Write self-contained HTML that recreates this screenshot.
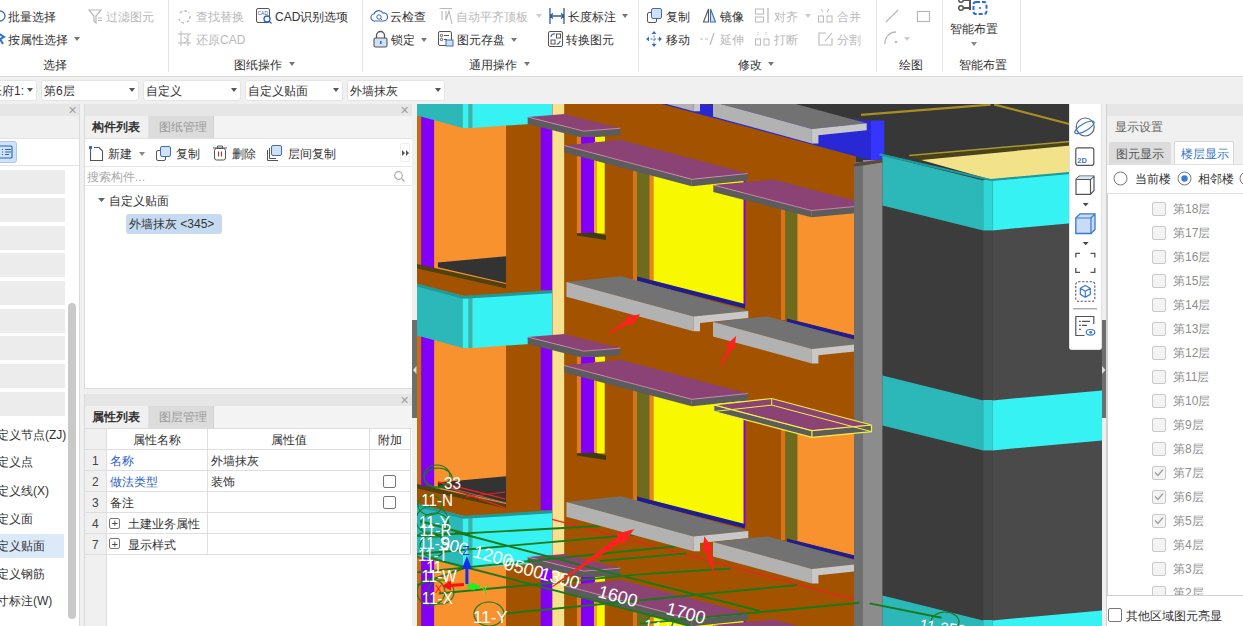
<!DOCTYPE html>
<html><head><meta charset="utf-8">
<style>
*{margin:0;padding:0;box-sizing:border-box}
html,body{width:1243px;height:626px;overflow:hidden;background:#f0f0f0;font-family:"Liberation Sans",sans-serif;font-size:12px;color:#333}
.a{position:absolute;white-space:nowrap;line-height:14px}
.arr{position:absolute;width:0;height:0;border-left:3px solid transparent;border-right:3px solid transparent;border-top:4px solid #777}
svg{position:absolute;overflow:visible}
</style></head><body>
<div style="position:absolute;left:0px;top:0px;width:1243px;height:77px;background:#fff;"></div><div style="position:absolute;left:0px;top:76px;width:1243px;height:1px;background:#d9d9d9;"></div><div style="position:absolute;left:168px;top:0px;width:1px;height:72px;background:#e3e3e3;"></div><div style="position:absolute;left:362px;top:0px;width:1px;height:72px;background:#e3e3e3;"></div><div style="position:absolute;left:638px;top:0px;width:1px;height:72px;background:#e3e3e3;"></div><div style="position:absolute;left:876px;top:0px;width:1px;height:72px;background:#e3e3e3;"></div><div style="position:absolute;left:942px;top:0px;width:1px;height:72px;background:#e3e3e3;"></div><div style="position:absolute;left:1020px;top:0px;width:1px;height:72px;background:#e3e3e3;"></div><svg style="left:0px;top:9px;" width="6" height="14" viewBox="0 0 6 14"><circle cx="0" cy="7" r="5" fill="none" stroke="#3d6fb8" stroke-width="1.3"/></svg><div class="a" style="left:8px;top:9.5px;">批量选择</div><svg style="left:0px;top:31px;" width="6" height="16" viewBox="0 0 6 16"><path d="M-2 2 L4 6 L0 8 L3 13" fill="none" stroke="#2f6fd0" stroke-width="2"/></svg><div class="a" style="left:8px;top:32.5px;">按属性选择</div><div class="arr" style="left:74px;top:37px;border-top-color:#777"></div><svg style="left:88px;top:9px;" width="14" height="15" viewBox="0 0 14 15"><path d="M1 1 H13 L8 7 V14 L6 12 V7 Z" fill="none" stroke="#b9b9b9" stroke-width="1.2"/><path d="M10 9h4M10 11.5h4" stroke="#b9b9b9"/></svg><div class="a" style="left:106px;top:10px;color:#b9b9b9;">过滤图元</div><div class="a" style="left:43px;top:58px;">选择</div><svg style="left:177px;top:9px;" width="15" height="16" viewBox="0 0 15 16"><path d="M3 4 A6 6 0 0 1 12 4 M13 7 A6 6 0 0 1 10 13 M7 14 A6 6 0 0 1 2 10" fill="none" stroke="#b9b9b9" stroke-width="1.3" stroke-dasharray="3 1.5"/></svg><div class="a" style="left:196px;top:10px;color:#b9b9b9;">查找替换</div><svg style="left:177px;top:31px;" width="15" height="16" viewBox="0 0 15 16"><path d="M1 3H14M4 0V15M1 12H14M11 3V15" fill="none" stroke="#b9b9b9" stroke-width="1"/><path d="M7 6l4 3-4 3" fill="none" stroke="#b9b9b9"/></svg><div class="a" style="left:196px;top:32.5px;color:#b9b9b9;">还原CAD</div><svg style="left:256px;top:8px;" width="16" height="17" viewBox="0 0 16 17"><rect x="0.5" y="0.5" width="13" height="14" rx="1.5" fill="none" stroke="#555"/><text x="1.5" y="7" font-size="5" fill="#2d62c0" font-family="Liberation Sans">CAD</text><circle cx="11" cy="11" r="3" fill="#fff" stroke="#2d62c0" stroke-width="1.3"/><path d="M13 13l2.5 2.5" stroke="#2d62c0" stroke-width="1.3"/></svg><div class="a" style="left:275px;top:10px;">CAD识别选项</div><div class="a" style="left:234px;top:57.5px;">图纸操作</div><div class="arr" style="left:289px;top:62px;border-top-color:#777"></div><svg style="left:371px;top:8px;" width="16" height="16" viewBox="0 0 16 16"><path d="M4 13 A3.5 3.5 0 0 1 3 6 A5 5 0 0 1 12 5 A4 4 0 0 1 13 13 Z" fill="none" stroke="#3d6fb8" stroke-width="1.2"/><circle cx="8" cy="9" r="2.2" fill="none" stroke="#3d6fb8"/><path d="M9.5 10.5l1.5 1.5" stroke="#3d6fb8"/></svg><div class="a" style="left:390px;top:9.5px;">云检查</div><svg style="left:439px;top:8px;" width="14" height="17" viewBox="0 0 14 17"><path d="M0.5 0.5H13M3 3V12M7 3V12M7 12 L10 3 L13 16" fill="none" stroke="#b9b9b9" stroke-width="1.1"/></svg><div class="a" style="left:456px;top:9.5px;color:#b9b9b9;">自动平齐顶板</div><div class="arr" style="left:536px;top:14px;border-top-color:#ccc"></div><svg style="left:549px;top:8px;" width="16" height="16" viewBox="0 0 16 16"><path d="M1 0V16M15 0V16M1 8H15M1 8l3-2.5M1 8l3 2.5M15 8l-3-2.5M15 8l-3 2.5" fill="none" stroke="#2d5aa0" stroke-width="1.3"/></svg><div class="a" style="left:568px;top:9.5px;">长度标注</div><div class="arr" style="left:622px;top:14px;border-top-color:#777"></div><svg style="left:373px;top:31px;" width="15" height="17" viewBox="0 0 15 17"><path d="M3.5 7V4.5A4 4 0 0 1 11.5 4.5V7" fill="none" stroke="#555" stroke-width="1.3"/><rect x="1" y="7" width="13" height="9" rx="1.5" fill="#cfe0f7" stroke="#555" stroke-width="1.1"/><rect x="7" y="10" width="1.5" height="3" fill="#2d62c0"/></svg><div class="a" style="left:391px;top:32.5px;">锁定</div><div class="arr" style="left:421px;top:37.5px;border-top-color:#777"></div><svg style="left:438px;top:31px;" width="16" height="16" viewBox="0 0 16 16"><rect x="0.5" y="0.5" width="13" height="14" rx="1.5" fill="none" stroke="#555"/><circle cx="3.5" cy="4.5" r="1.2" fill="none" stroke="#555"/><path d="M6 4.5H11M6 8.5H9" stroke="#555"/><circle cx="3.5" cy="8.5" r="1.2" fill="none" stroke="#555"/><rect x="8" y="9" width="7" height="6" fill="#cfe0f7" stroke="#3d6fb8"/></svg><div class="a" style="left:457px;top:32.5px;">图元存盘</div><div class="arr" style="left:511px;top:37.5px;border-top-color:#777"></div><svg style="left:548px;top:31px;" width="15" height="16" viewBox="0 0 15 16"><rect x="0.5" y="0.5" width="14" height="15" rx="1.5" fill="none" stroke="#555"/><rect x="3" y="9" width="4" height="4" fill="none" stroke="#555"/><rect x="8.5" y="3" width="4" height="4" fill="none" stroke="#555"/><path d="M3 6A3 3 0 0 1 7 3M12 10A3 3 0 0 1 8.5 13" fill="none" stroke="#3d6fb8" stroke-width="1.2"/></svg><div class="a" style="left:566px;top:32.5px;">转换图元</div><div class="a" style="left:469px;top:57.5px;">通用操作</div><div class="arr" style="left:524px;top:62px;border-top-color:#777"></div><svg style="left:647px;top:8px;" width="15" height="15" viewBox="0 0 15 15"><rect x="0.5" y="4.5" width="9" height="10" rx="1.5" fill="#fff" stroke="#555"/><rect x="4.5" y="0.5" width="10" height="10" rx="1.5" fill="#cfe0f7" stroke="#3d6fb8"/></svg><div class="a" style="left:666px;top:9.5px;">复制</div><svg style="left:646px;top:31px;" width="16" height="16" viewBox="0 0 16 16"><path d="M8 1V15M1 8H15" stroke="#3d6fb8" stroke-width="1" stroke-dasharray="2 1.5"/><path d="M8 0l-2.5 3h5zM8 16l-2.5-3h5zM0 8l3-2.5v5zM16 8l-3-2.5v5z" fill="#3d6fb8"/></svg><div class="a" style="left:666px;top:32.5px;">移动</div><svg style="left:703px;top:8px;" width="13" height="15" viewBox="0 0 13 15"><path d="M5.5 1 L0.5 14 H5.5Z" fill="none" stroke="#555" stroke-width="1.1"/><path d="M7.5 1 L12.5 14 H7.5Z" fill="#cfe0f7" stroke="#3d6fb8" stroke-width="1.1"/></svg><div class="a" style="left:720px;top:9.5px;">镜像</div><svg style="left:700px;top:32px;" width="15" height="14" viewBox="0 0 15 14"><path d="M0 7H3M5 7H8M10 13 L14 1" stroke="#b9b9b9" stroke-width="1.2"/></svg><div class="a" style="left:720px;top:32.5px;color:#b9b9b9;">延伸</div><svg style="left:755px;top:8px;" width="15" height="15" viewBox="0 0 15 15"><rect x="0.5" y="1" width="8" height="5" fill="none" stroke="#b9b9b9"/><rect x="0.5" y="9" width="8" height="5" fill="none" stroke="#b9b9b9"/><path d="M13 0V15" stroke="#b9b9b9" stroke-width="1.3"/></svg><div class="a" style="left:774px;top:9.5px;color:#b9b9b9;">对齐</div><div class="arr" style="left:805px;top:14px;border-top-color:#ccc"></div><svg style="left:755px;top:31px;" width="15" height="15" viewBox="0 0 15 15"><rect x="0.5" y="8" width="5" height="6" fill="none" stroke="#b9b9b9"/><rect x="9" y="8" width="5" height="6" fill="none" stroke="#b9b9b9"/><path d="M3 1v4M11 1v4" stroke="#b9b9b9" stroke-dasharray="1 1"/></svg><div class="a" style="left:774px;top:32.5px;color:#b9b9b9;">打断</div><svg style="left:818px;top:8px;" width="15" height="15" viewBox="0 0 15 15"><rect x="0.5" y="8" width="5" height="6" fill="none" stroke="#b9b9b9"/><rect x="9" y="8" width="5" height="6" fill="none" stroke="#b9b9b9"/><path d="M3 1l2 3M11 1l-2 3" stroke="#b9b9b9"/></svg><div class="a" style="left:837px;top:9.5px;color:#b9b9b9;">合并</div><svg style="left:818px;top:32px;" width="15" height="14" viewBox="0 0 15 14"><path d="M8 1H1V13H14V6" fill="none" stroke="#b9b9b9" stroke-width="1.1"/><path d="M7 9 L14 1" stroke="#b9b9b9" stroke-width="1.1"/></svg><div class="a" style="left:837px;top:32.5px;color:#b9b9b9;">分割</div><div class="a" style="left:738px;top:57.5px;">修改</div><div class="arr" style="left:768px;top:62px;border-top-color:#777"></div><svg style="left:885px;top:9px;" width="14" height="14" viewBox="0 0 14 14"><path d="M1 13 L13 1" stroke="#b9b9b9" stroke-width="1.3"/></svg><svg style="left:917px;top:11px;" width="13" height="11" viewBox="0 0 13 11"><rect x="0.5" y="0.5" width="12" height="10" fill="none" stroke="#b9b9b9" stroke-width="1.2"/></svg><svg style="left:884px;top:30px;" width="15" height="15" viewBox="0 0 15 15"><path d="M1 14 A11 11 0 0 1 12 2" fill="none" stroke="#b9b9b9" stroke-width="1.3"/><circle cx="12" cy="12" r="1.3" fill="#b9b9b9"/></svg><div class="arr" style="left:904px;top:36.5px;border-top-color:#ccc"></div><div class="a" style="left:899px;top:58px;">绘图</div><svg style="left:958px;top:-2px;" width="31" height="18" viewBox="0 0 31 18"><path d="M3 2H12M3 10H12M12 0V12" stroke="#555" stroke-width="2"/><circle cx="3" cy="2" r="2.3" fill="#fff" stroke="#555" stroke-width="1.5"/><circle cx="3" cy="10" r="2.3" fill="#fff" stroke="#555" stroke-width="1.5"/><rect x="15.5" y="4" width="13" height="12" rx="2.5" fill="none" stroke="#2d6ad8" stroke-width="2" stroke-dasharray="4 2"/><circle cx="22" cy="10" r="1" fill="#2d6ad8"/></svg><div class="a" style="left:950px;top:22px;">智能布置</div><div class="arr" style="left:971px;top:42px;border-top-color:#888"></div><div class="a" style="left:959px;top:58px;">智能布置</div><div style="position:absolute;left:-61px;top:80px;width:98px;height:21px;background:#fff;border:1px solid #e4e4e4;border-radius:3px"></div><div class="a" style="left:-34px;top:83.5px;color:#333;">首层帐府1:</div><div class="arr" style="left:27px;top:88px;border-top-color:#555"></div><div style="position:absolute;left:41px;top:80px;width:98px;height:21px;background:#fff;border:1px solid #e4e4e4;border-radius:3px"></div><div class="a" style="left:44px;top:83.5px;color:#333;">第6层</div><div class="arr" style="left:129px;top:88px;border-top-color:#555"></div><div style="position:absolute;left:143px;top:80px;width:98px;height:21px;background:#fff;border:1px solid #e4e4e4;border-radius:3px"></div><div class="a" style="left:146px;top:83.5px;color:#333;">自定义</div><div class="arr" style="left:231px;top:88px;border-top-color:#555"></div><div style="position:absolute;left:245px;top:80px;width:98px;height:21px;background:#fff;border:1px solid #e4e4e4;border-radius:3px"></div><div class="a" style="left:248px;top:83.5px;color:#333;">自定义贴面</div><div class="arr" style="left:333px;top:88px;border-top-color:#555"></div><div style="position:absolute;left:347px;top:80px;width:98px;height:21px;background:#fff;border:1px solid #e4e4e4;border-radius:3px"></div><div class="a" style="left:350px;top:83.5px;color:#333;">外墙抹灰</div><div class="arr" style="left:435px;top:88px;border-top-color:#555"></div><div style="position:absolute;left:0px;top:104px;width:80px;height:522px;background:#fff;"></div><div style="position:absolute;left:0px;top:104px;width:80px;height:12px;background:#e6e6e6;"></div><div class="a" style="left:68px;top:103px;color:#a0a0a0;font-size:11px;">✕</div><div style="position:absolute;left:0px;top:116px;width:80px;height:22px;background:#f0f0f0;"></div><div style="position:absolute;left:0px;top:138px;width:80px;height:1px;background:#e3e3e3;"></div><div style="position:absolute;left:0px;top:165px;width:80px;height:1px;background:#e3e3e3;"></div><div style="position:absolute;left:-4px;top:141px;width:21px;height:22px;background:#cfe2f8;border:1px solid #a9c8ee;border-radius:3px"></div><svg style="left:0px;top:145px;" width="14" height="14" viewBox="0 0 14 14"><rect x="-3" y="1" width="15" height="12" rx="1" fill="none" stroke="#2d62c0" stroke-width="1.1"/><path d="M2 4.5h1M5 4.5h6M2 7h1M5 7h6M2 9.5h1M5 9.5h4" stroke="#2d62c0"/></svg><div style="position:absolute;left:0px;top:170px;width:65px;height:24px;background:#ececec;"></div><div style="position:absolute;left:0px;top:198px;width:65px;height:24px;background:#ececec;"></div><div style="position:absolute;left:0px;top:226px;width:65px;height:24px;background:#ececec;"></div><div style="position:absolute;left:0px;top:253px;width:65px;height:24px;background:#ececec;"></div><div style="position:absolute;left:0px;top:281px;width:65px;height:24px;background:#ececec;"></div><div style="position:absolute;left:0px;top:309px;width:65px;height:24px;background:#ececec;"></div><div style="position:absolute;left:0px;top:336px;width:65px;height:24px;background:#ececec;"></div><div style="position:absolute;left:0px;top:364px;width:65px;height:24px;background:#ececec;"></div><div style="position:absolute;left:0px;top:392px;width:65px;height:24px;background:#ececec;"></div><div style="position:absolute;left:0px;top:534px;width:64px;height:24px;background:#dce9f9;"></div><div class="a" style="left:-3px;top:427.8px;color:#333;">定义节点(ZJ)</div><div class="a" style="left:-3px;top:454.7px;color:#333;">定义点</div><div class="a" style="left:-3px;top:484px;color:#333;">定义线(X)</div><div class="a" style="left:-3px;top:511.6px;color:#333;">定义面</div><div class="a" style="left:-3px;top:539px;color:#333;">定义贴面</div><div class="a" style="left:-3px;top:566.8px;color:#333;">定义钢筋</div><div class="a" style="left:-3px;top:594px;color:#333;">寸标注(W)</div><div style="position:absolute;left:68px;top:303px;width:8px;height:316px;background:#c9c9c9;border-radius:4px"></div><div style="position:absolute;left:79px;top:104px;width:1px;height:522px;background:#dadada;"></div><div style="position:absolute;left:84px;top:104px;width:329px;height:285px;background:#fff;"></div><div style="position:absolute;left:84px;top:104px;width:329px;height:12px;background:#e6e6e6;"></div><div class="a" style="left:400px;top:103px;color:#a0a0a0;font-size:11px;">✕</div><div style="position:absolute;left:84px;top:116px;width:329px;height:22px;background:#f3f3f3;"></div><div style="position:absolute;left:84px;top:116px;width:65px;height:23px;background:#f0f0f0;border-right:1px solid #e0e0e0"></div><div style="position:absolute;left:149px;top:116px;width:65px;height:22px;background:#dcdcdc;border-right:1px solid #d0d0d0"></div><div class="a" style="left:92px;top:120px;color:#333;font-weight:bold;">构件列表</div><div class="a" style="left:159px;top:120px;color:#999;">图纸管理</div><div style="position:absolute;left:84px;top:138px;width:329px;height:1px;background:#e2e2e2;"></div><svg style="left:89px;top:146px;" width="15" height="16" viewBox="0 0 15 16"><path d="M1.5 2.5V14.5H13.5V5L10 1.5H5" fill="none" stroke="#555" stroke-width="1.1"/><path d="M0 0l3 3M3 0L0 3M1.5 0v3M0 1.5h3" stroke="#2d62c0" stroke-width="0.9"/></svg><div class="a" style="left:108px;top:146.5px;">新建</div><div class="arr" style="left:139px;top:151.5px;border-top-color:#888"></div><svg style="left:156px;top:146px;" width="15" height="15" viewBox="0 0 15 15"><rect x="0.5" y="4.5" width="9" height="10" rx="1.5" fill="#fff" stroke="#555"/><rect x="4.5" y="0.5" width="10" height="10" rx="1.5" fill="#cfe0f7" stroke="#3d6fb8"/></svg><div class="a" style="left:176px;top:146.5px;">复制</div><svg style="left:213px;top:145px;" width="14" height="16" viewBox="0 0 14 16"><path d="M0 3H14M4.5 3V1H9.5V3" fill="none" stroke="#555"/><rect x="1.5" y="3.5" width="11" height="11.5" rx="2" fill="none" stroke="#555"/><path d="M5.5 6.5V11.5M8.5 6.5V11.5" stroke="#c03030" stroke-width="1.1"/></svg><div class="a" style="left:232px;top:146.5px;">删除</div><svg style="left:267px;top:145px;" width="16" height="16" viewBox="0 0 16 16"><path d="M0.5 5V15.5H11" fill="none" stroke="#555"/><path d="M2.5 3V13.5H9" fill="none" stroke="#555"/><rect x="4.5" y="0.5" width="10" height="10" rx="1.5" fill="#cfe0f7" stroke="#3d6fb8"/></svg><div class="a" style="left:288px;top:146.5px;">层间复制</div><div style="position:absolute;left:400px;top:143px;width:10px;height:19px;background:#fff;border:1px solid #eee;border-radius:2px"></div><svg style="left:402px;top:150px;" width="8" height="6" viewBox="0 0 8 6"><path d="M0 0l3 3-3 3zM4 0l3 3-3 3z" fill="#555"/></svg><div style="position:absolute;left:84px;top:166px;width:329px;height:1px;background:#e8e8e8;"></div><div class="a" style="left:87px;top:169.5px;color:#aaa;">搜索构件...</div><svg style="left:394px;top:171px;" width="11" height="11" viewBox="0 0 11 11"><circle cx="4.5" cy="4.5" r="3.8" fill="none" stroke="#aaa" stroke-width="1.2"/><path d="M7.5 7.5l3 3" stroke="#aaa" stroke-width="1.3"/></svg><div style="position:absolute;left:84px;top:185px;width:329px;height:1px;background:#e8e8e8;"></div><svg style="left:98px;top:198px;" width="7" height="5" viewBox="0 0 7 5"><path d="M0 0h7l-3.5 4z" fill="#666"/></svg><div class="a" style="left:109px;top:193.5px;">自定义贴面</div><div style="position:absolute;left:126px;top:214px;width:96px;height:20px;background:#c6dbf1;border-radius:3px"></div><div class="a" style="left:129px;top:217px;">外墙抹灰 &lt;345&gt;</div><div style="position:absolute;left:84px;top:388px;width:329px;height:1px;background:#dcdcdc;"></div><div style="position:absolute;left:84px;top:104px;width:1px;height:285px;background:#dadada;"></div><div style="position:absolute;left:412px;top:104px;width:1px;height:285px;background:#dadada;"></div><div style="position:absolute;left:84px;top:394px;width:329px;height:232px;background:#fff;"></div><div style="position:absolute;left:84px;top:394px;width:329px;height:12px;background:#e6e6e6;"></div><div class="a" style="left:400px;top:393px;color:#a0a0a0;font-size:11px;">✕</div><div style="position:absolute;left:84px;top:406px;width:329px;height:22px;background:#f3f3f3;"></div><div style="position:absolute;left:84px;top:406px;width:65px;height:23px;background:#f0f0f0;border-right:1px solid #e0e0e0"></div><div style="position:absolute;left:149px;top:406px;width:65px;height:22px;background:#dcdcdc;border-right:1px solid #d0d0d0"></div><div class="a" style="left:92px;top:410px;color:#333;font-weight:bold;">属性列表</div><div class="a" style="left:159px;top:410px;color:#999;">图层管理</div><div style="position:absolute;left:84px;top:428px;width:329px;height:1px;background:#dcdcdc;"></div><div style="position:absolute;left:85px;top:429px;width:22px;height:197px;background:#f0f0f0;"></div><div style="position:absolute;left:85px;top:449px;width:325px;height:1px;background:#dedede;"></div><div style="position:absolute;left:85px;top:470px;width:325px;height:1px;background:#dedede;"></div><div style="position:absolute;left:85px;top:491px;width:325px;height:1px;background:#dedede;"></div><div style="position:absolute;left:85px;top:512px;width:325px;height:1px;background:#dedede;"></div><div style="position:absolute;left:85px;top:533px;width:325px;height:1px;background:#dedede;"></div><div style="position:absolute;left:85px;top:554px;width:325px;height:1px;background:#dedede;"></div><div style="position:absolute;left:106px;top:429px;width:1px;height:125px;background:#dedede;"></div><div style="position:absolute;left:207px;top:429px;width:1px;height:125px;background:#dedede;"></div><div style="position:absolute;left:369px;top:429px;width:1px;height:125px;background:#dedede;"></div><div style="position:absolute;left:410px;top:429px;width:1px;height:125px;background:#dedede;"></div><div style="position:absolute;left:106px;top:554px;width:1px;height:72px;background:#dedede;"></div><div class="a" style="left:133px;top:432.5px;">属性名称</div><div class="a" style="left:271px;top:432.5px;">属性值</div><div class="a" style="left:378px;top:432.5px;">附加</div><div class="a" style="left:92px;top:453.5px;color:#444;">1</div><div class="a" style="left:110px;top:453.5px;color:#2d5cc8;">名称</div><div class="a" style="left:211px;top:453.5px;">外墙抹灰</div><div class="a" style="left:92px;top:474.5px;color:#444;">2</div><div class="a" style="left:110px;top:474.5px;color:#2d5cc8;">做法类型</div><div class="a" style="left:211px;top:474.5px;">装饰</div><div style="position:absolute;left:383px;top:475px;width:13px;height:13px;background:#fff;border:1px solid #777;border-radius:2px"></div><div class="a" style="left:92px;top:495.5px;color:#444;">3</div><div class="a" style="left:110px;top:495.5px;color:#333;">备注</div><div style="position:absolute;left:383px;top:496px;width:13px;height:13px;background:#fff;border:1px solid #777;border-radius:2px"></div><div class="a" style="left:92px;top:516.5px;color:#444;">4</div><div style="position:absolute;left:109px;top:518px;width:11px;height:11px;background:#fff;border:1px solid #777;border-radius:2px"></div><div class="a" style="left:111.5px;top:516.0px;color:#444;font-size:11px;">+</div><div class="a" style="left:128px;top:516.5px;">土建业务属性</div><div class="a" style="left:92px;top:537.5px;color:#444;">7</div><div style="position:absolute;left:109px;top:538px;width:11px;height:11px;background:#fff;border:1px solid #777;border-radius:2px"></div><div class="a" style="left:111.5px;top:537.0px;color:#444;font-size:11px;">+</div><div class="a" style="left:128px;top:537.5px;">显示样式</div><div style="position:absolute;left:84px;top:394px;width:1px;height:232px;background:#dadada;"></div><div style="position:absolute;left:412px;top:394px;width:1px;height:232px;background:#dadada;"></div><div style="position:absolute;left:412px;top:104px;width:5px;height:522px;background:#f0f0f0;"></div><div style="position:absolute;left:412px;top:320px;width:5px;height:98px;background:#6e6e6e;"></div><svg style="left:413px;top:366px;" width="4" height="8" viewBox="0 0 4 8"><path d="M3.5 0V8L0 4Z" fill="#ddd"/></svg><div style="position:absolute;left:1102px;top:104px;width:4px;height:522px;background:#f0f0f0;"></div><div style="position:absolute;left:1102px;top:320px;width:4px;height:98px;background:#6e6e6e;"></div><svg style="left:1102px;top:366px;" width="4" height="8" viewBox="0 0 4 8"><path d="M0 0V8L3.5 4Z" fill="#ddd"/></svg><div style="position:absolute;left:1106px;top:104px;width:137px;height:522px;background:#fff;"></div><div style="position:absolute;left:1106px;top:104px;width:137px;height:12px;background:#e6e6e6;"></div><div style="position:absolute;left:1106px;top:116px;width:137px;height:21px;background:#f0f0f0;"></div><div class="a" style="left:1115px;top:119.5px;color:#666;">显示设置</div><div style="position:absolute;left:1106px;top:137px;width:137px;height:27px;background:#f0f0f0;"></div><div style="position:absolute;left:1109px;top:142px;width:62px;height:22px;background:#dcdcdc;border-radius:2px 2px 0 0"></div><div class="a" style="left:1116px;top:146.5px;color:#555;">图元显示</div><div style="position:absolute;left:1174px;top:141px;width:60px;height:24px;background:#fff;border:1px solid #d6d6d6;border-bottom:none;border-radius:2px 2px 0 0"></div><div class="a" style="left:1181px;top:146.5px;color:#3a78c8;">楼层显示</div><div style="position:absolute;left:1106px;top:164px;width:137px;height:1px;background:#e0e0e0;"></div><svg style="left:1113px;top:171px;" width="16" height="16" viewBox="0 0 16 16"><circle cx="7.5" cy="7.5" r="6.5" fill="#fff" stroke="#777"/></svg><div class="a" style="left:1135px;top:172px;">当前楼</div><svg style="left:1177px;top:171px;" width="16" height="16" viewBox="0 0 16 16"><circle cx="7.5" cy="7.5" r="6.5" fill="#fff" stroke="#777"/><circle cx="7.5" cy="7.5" r="3.2" fill="#3a7ad8"/></svg><div class="a" style="left:1197.5px;top:172px;">相邻楼</div><svg style="left:1239px;top:171px;" width="16" height="16" viewBox="0 0 16 16"><circle cx="7.5" cy="7.5" r="6.5" fill="#fff" stroke="#777"/></svg><div style="position:absolute;left:1106px;top:193px;width:137px;height:1px;background:#e0e0e0;"></div><div style="position:absolute;left:1107px;top:194px;width:1px;height:402px;background:#cfcfcf;"></div><div style="position:absolute;left:1152px;top:202px;width:14px;height:14px;background:#f4f4f4;border:1px solid #c8c8c8;border-radius:2px"></div><div class="a" style="left:1173px;top:202px;color:#8e8e8e;">第18层</div><div style="position:absolute;left:1152px;top:226px;width:14px;height:14px;background:#f4f4f4;border:1px solid #c8c8c8;border-radius:2px"></div><div class="a" style="left:1173px;top:226px;color:#8e8e8e;">第17层</div><div style="position:absolute;left:1152px;top:250px;width:14px;height:14px;background:#f4f4f4;border:1px solid #c8c8c8;border-radius:2px"></div><div class="a" style="left:1173px;top:250px;color:#8e8e8e;">第16层</div><div style="position:absolute;left:1152px;top:274px;width:14px;height:14px;background:#f4f4f4;border:1px solid #c8c8c8;border-radius:2px"></div><div class="a" style="left:1173px;top:274px;color:#8e8e8e;">第15层</div><div style="position:absolute;left:1152px;top:298px;width:14px;height:14px;background:#f4f4f4;border:1px solid #c8c8c8;border-radius:2px"></div><div class="a" style="left:1173px;top:298px;color:#8e8e8e;">第14层</div><div style="position:absolute;left:1152px;top:322px;width:14px;height:14px;background:#f4f4f4;border:1px solid #c8c8c8;border-radius:2px"></div><div class="a" style="left:1173px;top:322px;color:#8e8e8e;">第13层</div><div style="position:absolute;left:1152px;top:346px;width:14px;height:14px;background:#f4f4f4;border:1px solid #c8c8c8;border-radius:2px"></div><div class="a" style="left:1173px;top:346px;color:#8e8e8e;">第12层</div><div style="position:absolute;left:1152px;top:370px;width:14px;height:14px;background:#f4f4f4;border:1px solid #c8c8c8;border-radius:2px"></div><div class="a" style="left:1173px;top:370px;color:#8e8e8e;">第11层</div><div style="position:absolute;left:1152px;top:394px;width:14px;height:14px;background:#f4f4f4;border:1px solid #c8c8c8;border-radius:2px"></div><div class="a" style="left:1173px;top:394px;color:#8e8e8e;">第10层</div><div style="position:absolute;left:1152px;top:418px;width:14px;height:14px;background:#f4f4f4;border:1px solid #c8c8c8;border-radius:2px"></div><div class="a" style="left:1173px;top:418px;color:#8e8e8e;">第9层</div><div style="position:absolute;left:1152px;top:442px;width:14px;height:14px;background:#f4f4f4;border:1px solid #c8c8c8;border-radius:2px"></div><div class="a" style="left:1173px;top:442px;color:#8e8e8e;">第8层</div><div style="position:absolute;left:1152px;top:466px;width:14px;height:14px;background:#f4f4f4;border:1px solid #c8c8c8;border-radius:2px"></div><svg style="left:1154px;top:468px;" width="10" height="9" viewBox="0 0 10 9"><path d="M1 4.5L4 7.5L9 1.5" fill="none" stroke="#a0a0a0" stroke-width="1.3"/></svg><div class="a" style="left:1173px;top:466px;color:#8e8e8e;">第7层</div><div style="position:absolute;left:1152px;top:490px;width:14px;height:14px;background:#f4f4f4;border:1px solid #c8c8c8;border-radius:2px"></div><svg style="left:1154px;top:492px;" width="10" height="9" viewBox="0 0 10 9"><path d="M1 4.5L4 7.5L9 1.5" fill="none" stroke="#a0a0a0" stroke-width="1.3"/></svg><div class="a" style="left:1173px;top:490px;color:#8e8e8e;">第6层</div><div style="position:absolute;left:1152px;top:514px;width:14px;height:14px;background:#f4f4f4;border:1px solid #c8c8c8;border-radius:2px"></div><svg style="left:1154px;top:516px;" width="10" height="9" viewBox="0 0 10 9"><path d="M1 4.5L4 7.5L9 1.5" fill="none" stroke="#a0a0a0" stroke-width="1.3"/></svg><div class="a" style="left:1173px;top:514px;color:#8e8e8e;">第5层</div><div style="position:absolute;left:1152px;top:538px;width:14px;height:14px;background:#f4f4f4;border:1px solid #c8c8c8;border-radius:2px"></div><div class="a" style="left:1173px;top:538px;color:#8e8e8e;">第4层</div><div style="position:absolute;left:1152px;top:562px;width:14px;height:14px;background:#f4f4f4;border:1px solid #c8c8c8;border-radius:2px"></div><div class="a" style="left:1173px;top:562px;color:#8e8e8e;">第3层</div><div style="position:absolute;left:1152px;top:586px;width:14px;height:14px;background:#f4f4f4;border:1px solid #c8c8c8;border-radius:2px"></div><div class="a" style="left:1173px;top:586px;color:#8e8e8e;">第2层</div><div style="position:absolute;left:1106px;top:596px;width:137px;height:30px;background:#fff;"></div><div style="position:absolute;left:1106px;top:595px;width:137px;height:1px;background:#cfcfcf;"></div><div style="position:absolute;left:1108px;top:608px;width:14px;height:14px;background:#fff;border:1px solid #777;border-radius:2px"></div><div class="a" style="left:1125.5px;top:608.5px;">其他区域图元亮显</div><div style="position:absolute;left:1106px;top:104px;width:1px;height:522px;background:#d0d0d0;"></div><svg style="left:417px;top:104px" width="685" height="522" viewBox="417 104 685 522"><defs><clipPath id="vc"><rect x="417" y="104" width="685" height="522"/></clipPath></defs><g clip-path="url(#vc)"><rect x="417.0" y="104.0" width="685.0" height="522.0" fill="#a35300"/><rect x="856.0" y="104.0" width="246.0" height="522.0" fill="#383838"/><rect x="417.0" y="104.0" width="4.2" height="522.0" fill="#c96b10"/><rect x="421.2" y="104.0" width="13.0" height="522.0" fill="#8200f6"/><rect x="434.2" y="104.0" width="71.8" height="522.0" fill="#f8922e"/><rect x="506.0" y="104.0" width="34.7" height="522.0" fill="#a35300"/><rect x="540.7" y="104.0" width="11.7" height="522.0" fill="#8200f6"/><rect x="552.4" y="104.0" width="12.0" height="522.0" fill="#f6e28e"/><rect x="564.4" y="104.0" width="291.6" height="522.0" fill="#a35300"/><polygon points="700.0,104.0 1102.0,104.0 1102.0,172.0 882.0,155.0 871.0,121.0" fill="#373737" /><polygon points="661.7,104.0 700.0,104.0 871.0,121.0 871.0,160.5" fill="#2828d4" /><polygon points="871.0,120.6 884.3,120.6 884.3,159.6 871.0,160.2" fill="#3535ff" /><g transform="translate(0,-440)"><polygon points="566.4,501.9 621.2,496.3 748.3,530.9 693.5,536.5" fill="#727272" /><polygon points="566.4,501.9 693.5,536.5 693.5,551.3 566.4,516.7" fill="#b2b2b2" /><polygon points="693.5,536.5 748.3,530.9 748.3,538.1 700.0,543.0 700.0,551.3 693.5,551.3" fill="#c8c8c8" /><polygon points="713.0,542.0 767.8,536.4 866.7,563.3 811.9,568.9" fill="#727272" /><polygon points="713.0,542.0 811.9,568.9 811.9,583.4 713.0,556.5" fill="#b2b2b2" /><polygon points="811.9,568.9 866.7,563.3 866.7,570.3 818.4,575.2 818.4,583.4 811.9,583.4" fill="#c8c8c8" /></g><g transform="translate(0,-220)"><polygon points="437.9,262.6 506.0,256.2 506.0,283.0 437.9,267.3" fill="#333333" /><polygon points="417.0,264.0 506.0,284.0 506.0,289.0 417.0,269.0" fill="#4f4210" /><polygon points="417.0,268.5 506.0,288.5 552.0,290.5 552.0,292.3 468.4,297.0 417.0,284.5" fill="#a35300" /><polygon points="417.0,285.4 462.9,297.9 462.9,348.0 417.0,335.4" fill="#2cb8b8" /><rect x="462.9" y="297.2" width="5.5" height="50.8" fill="#36f2f2"/><rect x="468.4" y="297.2" width="4.2" height="50.8" fill="#2cb8b8"/><polygon points="472.6,297.9 552.0,292.3 552.0,342.4 472.6,348.0" fill="#36f2f2" /><polyline points="417.0,285.0 462.9,297.3 552.0,291.8" fill="none" stroke="#1f9a9a" stroke-width="3" /><rect x="576.9" y="356.0" width="4.1" height="97.0" fill="#e07c1e"/><rect x="581.0" y="356.0" width="13.0" height="97.5" fill="#8200f6"/><rect x="594.0" y="356.0" width="3.0" height="97.5" fill="#f0a030"/><rect x="597.0" y="356.0" width="7.7" height="97.5" fill="#f8f800"/><polygon points="576.9,453.5 594.0,452.5 606.0,455.5 606.0,460.0 576.9,455.5" fill="#3e3a14" /><rect x="633.0" y="388.0" width="4.0" height="117.0" fill="#d87418"/><rect x="637.0" y="388.0" width="12.5" height="117.0" fill="#6e6a1e"/><rect x="649.5" y="388.0" width="4.0" height="117.0" fill="#e8841e"/><polygon points="653.5,392.0 743.7,397.0 743.7,525.0 653.5,501.0" fill="#f8f800" /><rect x="743.7" y="395.0" width="1.8" height="131.0" fill="#8200f6"/><polygon points="637.0,496.5 745.0,524.0 745.0,528.5 637.0,501.0" fill="#1e1e90" /><rect x="781.0" y="415.0" width="4.4" height="125.0" fill="#d87418"/><rect x="785.4" y="415.0" width="12.0" height="125.0" fill="#6e6a1e"/><polygon points="797.4,430.0 855.0,430.0 855.0,556.0 797.4,541.0" fill="#f8922e" /><polygon points="786.8,538.5 855.0,555.5 855.0,559.5 786.8,542.5" fill="#1e1e90" /><polygon points="527.7,337.0 564.4,334.1 620.4,348.2 583.7,351.1" fill="#8b4274" /><polygon points="527.7,337.0 583.7,351.1 583.7,358.1 527.7,344.0" fill="#5c5c5c" /><polygon points="583.7,351.1 620.4,348.2 620.4,355.2 583.7,358.1" fill="#5c5c5c" /><polyline points="527.7,337.0 583.7,351.1 620.4,348.2" fill="none" stroke="#d890c0" stroke-width="0.8" /><rect x="578.0" y="357.0" width="3.0" height="5.0" fill="#e07c1e"/><rect x="581.0" y="357.0" width="14.0" height="5.0" fill="#8200f6"/><rect x="595.0" y="357.0" width="10.0" height="4.5" fill="#f8f800"/><polygon points="564.4,365.5 620.4,359.7 747.8,393.5 691.8,399.3" fill="#8b4274" /><polygon points="564.4,365.5 691.8,399.3 691.8,406.3 564.4,372.5" fill="#5c5c5c" /><polygon points="691.8,399.3 747.8,393.5 747.8,400.5 691.8,406.3" fill="#5c5c5c" /><polyline points="564.4,365.5 691.8,399.3 747.8,393.5" fill="none" stroke="#d890c0" stroke-width="0.8" /><polygon points="713.3,405.1 773.3,399.6 871.5,425.0 811.5,430.5" fill="#8b4274" /><polygon points="713.3,405.1 811.5,430.5 811.5,437.3 713.3,411.9" fill="#5c5c5c" /><polygon points="811.5,430.5 871.5,425.0 871.5,431.8 811.5,437.3" fill="#5c5c5c" /><polyline points="713.3,405.1 811.5,430.5 871.5,425.0" fill="none" stroke="#d890c0" stroke-width="0.8" /><polygon points="566.4,501.9 621.2,496.3 748.3,530.9 693.5,536.5" fill="#727272" /><polygon points="566.4,501.9 693.5,536.5 693.5,551.3 566.4,516.7" fill="#b2b2b2" /><polygon points="693.5,536.5 748.3,530.9 748.3,538.1 700.0,543.0 700.0,551.3 693.5,551.3" fill="#c8c8c8" /><polygon points="713.0,542.0 767.8,536.4 866.7,563.3 811.9,568.9" fill="#727272" /><polygon points="713.0,542.0 811.9,568.9 811.9,583.4 713.0,556.5" fill="#b2b2b2" /><polygon points="811.9,568.9 866.7,563.3 866.7,570.3 818.4,575.2 818.4,583.4 811.9,583.4" fill="#c8c8c8" /></g><g transform="translate(0,0)"><polygon points="437.9,262.6 506.0,256.2 506.0,283.0 437.9,267.3" fill="#333333" /><polygon points="417.0,264.0 506.0,284.0 506.0,289.0 417.0,269.0" fill="#4f4210" /><polygon points="417.0,268.5 506.0,288.5 552.0,290.5 552.0,292.3 468.4,297.0 417.0,284.5" fill="#a35300" /><polygon points="417.0,285.4 462.9,297.9 462.9,348.0 417.0,335.4" fill="#2cb8b8" /><rect x="462.9" y="297.2" width="5.5" height="50.8" fill="#36f2f2"/><rect x="468.4" y="297.2" width="4.2" height="50.8" fill="#2cb8b8"/><polygon points="472.6,297.9 552.0,292.3 552.0,342.4 472.6,348.0" fill="#36f2f2" /><polyline points="417.0,285.0 462.9,297.3 552.0,291.8" fill="none" stroke="#1f9a9a" stroke-width="3" /><rect x="576.9" y="356.0" width="4.1" height="97.0" fill="#e07c1e"/><rect x="581.0" y="356.0" width="13.0" height="97.5" fill="#8200f6"/><rect x="594.0" y="356.0" width="3.0" height="97.5" fill="#f0a030"/><rect x="597.0" y="356.0" width="7.7" height="97.5" fill="#f8f800"/><polygon points="576.9,453.5 594.0,452.5 606.0,455.5 606.0,460.0 576.9,455.5" fill="#3e3a14" /><rect x="633.0" y="388.0" width="4.0" height="117.0" fill="#d87418"/><rect x="637.0" y="388.0" width="12.5" height="117.0" fill="#6e6a1e"/><rect x="649.5" y="388.0" width="4.0" height="117.0" fill="#e8841e"/><polygon points="653.5,392.0 743.7,397.0 743.7,525.0 653.5,501.0" fill="#f8f800" /><rect x="743.7" y="395.0" width="1.8" height="131.0" fill="#8200f6"/><polygon points="637.0,496.5 745.0,524.0 745.0,528.5 637.0,501.0" fill="#1e1e90" /><rect x="781.0" y="415.0" width="4.4" height="125.0" fill="#d87418"/><rect x="785.4" y="415.0" width="12.0" height="125.0" fill="#6e6a1e"/><polygon points="797.4,430.0 855.0,430.0 855.0,556.0 797.4,541.0" fill="#f8922e" /><polygon points="786.8,538.5 855.0,555.5 855.0,559.5 786.8,542.5" fill="#1e1e90" /><polygon points="527.7,337.0 564.4,334.1 620.4,348.2 583.7,351.1" fill="#8b4274" /><polygon points="527.7,337.0 583.7,351.1 583.7,358.1 527.7,344.0" fill="#5c5c5c" /><polygon points="583.7,351.1 620.4,348.2 620.4,355.2 583.7,358.1" fill="#5c5c5c" /><polyline points="527.7,337.0 583.7,351.1 620.4,348.2" fill="none" stroke="#d890c0" stroke-width="0.8" /><rect x="578.0" y="357.0" width="3.0" height="5.0" fill="#e07c1e"/><rect x="581.0" y="357.0" width="14.0" height="5.0" fill="#8200f6"/><rect x="595.0" y="357.0" width="10.0" height="4.5" fill="#f8f800"/><polygon points="564.4,365.5 620.4,359.7 747.8,393.5 691.8,399.3" fill="#8b4274" /><polygon points="564.4,365.5 691.8,399.3 691.8,406.3 564.4,372.5" fill="#5c5c5c" /><polygon points="691.8,399.3 747.8,393.5 747.8,400.5 691.8,406.3" fill="#5c5c5c" /><polyline points="564.4,365.5 691.8,399.3 747.8,393.5" fill="none" stroke="#d890c0" stroke-width="0.8" /></g><g transform="translate(0,220)"><polygon points="437.9,262.6 506.0,256.2 506.0,283.0 437.9,267.3" fill="#333333" /><polygon points="417.0,264.0 506.0,284.0 506.0,289.0 417.0,269.0" fill="#4f4210" /><polygon points="417.0,268.5 506.0,288.5 552.0,290.5 552.0,292.3 468.4,297.0 417.0,284.5" fill="#a35300" /><polygon points="417.0,285.4 462.9,297.9 462.9,348.0 417.0,335.4" fill="#2cb8b8" /><rect x="462.9" y="297.2" width="5.5" height="50.8" fill="#36f2f2"/><rect x="468.4" y="297.2" width="4.2" height="50.8" fill="#2cb8b8"/><polygon points="472.6,297.9 552.0,292.3 552.0,342.4 472.6,348.0" fill="#36f2f2" /><polyline points="417.0,285.0 462.9,297.3 552.0,291.8" fill="none" stroke="#1f9a9a" stroke-width="3" /><rect x="576.9" y="356.0" width="4.1" height="97.0" fill="#e07c1e"/><rect x="581.0" y="356.0" width="13.0" height="97.5" fill="#8200f6"/><rect x="594.0" y="356.0" width="3.0" height="97.5" fill="#f0a030"/><rect x="597.0" y="356.0" width="7.7" height="97.5" fill="#f8f800"/><polygon points="576.9,453.5 594.0,452.5 606.0,455.5 606.0,460.0 576.9,455.5" fill="#3e3a14" /><rect x="633.0" y="388.0" width="4.0" height="117.0" fill="#d87418"/><rect x="637.0" y="388.0" width="12.5" height="117.0" fill="#6e6a1e"/><rect x="649.5" y="388.0" width="4.0" height="117.0" fill="#e8841e"/><polygon points="653.5,392.0 743.7,397.0 743.7,525.0 653.5,501.0" fill="#f8f800" /><rect x="743.7" y="395.0" width="1.8" height="131.0" fill="#8200f6"/><polygon points="637.0,496.5 745.0,524.0 745.0,528.5 637.0,501.0" fill="#1e1e90" /><rect x="781.0" y="415.0" width="4.4" height="125.0" fill="#d87418"/><rect x="785.4" y="415.0" width="12.0" height="125.0" fill="#6e6a1e"/><polygon points="797.4,430.0 855.0,430.0 855.0,556.0 797.4,541.0" fill="#f8922e" /><polygon points="786.8,538.5 855.0,555.5 855.0,559.5 786.8,542.5" fill="#1e1e90" /><polygon points="527.7,337.0 564.4,334.1 620.4,348.2 583.7,351.1" fill="#8b4274" /><polygon points="527.7,337.0 583.7,351.1 583.7,358.1 527.7,344.0" fill="#5c5c5c" /><polygon points="583.7,351.1 620.4,348.2 620.4,355.2 583.7,358.1" fill="#5c5c5c" /><polyline points="527.7,337.0 583.7,351.1 620.4,348.2" fill="none" stroke="#d890c0" stroke-width="0.8" /><rect x="578.0" y="357.0" width="3.0" height="5.0" fill="#e07c1e"/><rect x="581.0" y="357.0" width="14.0" height="5.0" fill="#8200f6"/><rect x="595.0" y="357.0" width="10.0" height="4.5" fill="#f8f800"/><polygon points="564.4,365.5 620.4,359.7 747.8,393.5 691.8,399.3" fill="#8b4274" /><polygon points="564.4,365.5 691.8,399.3 691.8,406.3 564.4,372.5" fill="#5c5c5c" /><polygon points="691.8,399.3 747.8,393.5 747.8,400.5 691.8,406.3" fill="#5c5c5c" /><polyline points="564.4,365.5 691.8,399.3 747.8,393.5" fill="none" stroke="#d890c0" stroke-width="0.8" /><polygon points="713.3,405.1 773.3,399.6 871.5,425.0 811.5,430.5" fill="#8b4274" /><polygon points="713.3,405.1 811.5,430.5 811.5,437.3 713.3,411.9" fill="#5c5c5c" /><polygon points="811.5,430.5 871.5,425.0 871.5,431.8 811.5,437.3" fill="#5c5c5c" /><polyline points="713.3,405.1 811.5,430.5 871.5,425.0" fill="none" stroke="#d890c0" stroke-width="0.8" /><polygon points="566.4,501.9 621.2,496.3 748.3,530.9 693.5,536.5" fill="#727272" /><polygon points="566.4,501.9 693.5,536.5 693.5,551.3 566.4,516.7" fill="#b2b2b2" /><polygon points="693.5,536.5 748.3,530.9 748.3,538.1 700.0,543.0 700.0,551.3 693.5,551.3" fill="#c8c8c8" /><polygon points="713.0,542.0 767.8,536.4 866.7,563.3 811.9,568.9" fill="#727272" /><polygon points="713.0,542.0 811.9,568.9 811.9,583.4 713.0,556.5" fill="#b2b2b2" /><polygon points="811.9,568.9 866.7,563.3 866.7,570.3 818.4,575.2 818.4,583.4 811.9,583.4" fill="#c8c8c8" /></g><polyline points="861.0,114.8 990.6,104.6" fill="none" stroke="#a88e22" stroke-width="2.2" /><polyline points="994.0,104.4 1069.3,124.0 1102.0,132.5" fill="none" stroke="#a88e22" stroke-width="2.2" /><polygon points="909.2,156.5 1102.0,139.5 1102.0,143.0 921.0,160.5" fill="#4a4218" /><polyline points="909.2,155.5 1102.0,138.7" fill="none" stroke="#a89a30" stroke-width="1.6" /><polygon points="921.2,160.1 1102.0,142.5 1102.0,170.4 990.6,179.6" fill="#f2e38a" /><polygon points="882.4,205.4 983.2,230.4 983.2,626.0 882.4,626.0" fill="#3c3c3c" /><rect x="983.2" y="230.0" width="9.3" height="396.0" fill="#464646"/><polygon points="992.5,230.4 1102.0,220.4 1102.0,626.0 992.5,626.0" fill="#4a4a4a" /><g transform="translate(0,0)"><polygon points="882.4,155.4 983.2,180.4 983.2,230.4 882.4,205.4" fill="#2cb8b8" /><rect x="983.2" y="180.0" width="9.3" height="50.4" fill="#30d6d6"/><polygon points="992.5,180.4 1102.0,170.4 1102.0,220.4 992.5,230.4" fill="#36f2f2" /></g><g transform="translate(0,220)"><polygon points="882.4,155.4 983.2,180.4 983.2,230.4 882.4,205.4" fill="#2cb8b8" /><rect x="983.2" y="180.0" width="9.3" height="50.4" fill="#30d6d6"/><polygon points="992.5,180.4 1102.0,170.4 1102.0,220.4 992.5,230.4" fill="#36f2f2" /></g><g transform="translate(0,440)"><polygon points="882.4,155.4 983.2,180.4 983.2,230.4 882.4,205.4" fill="#2cb8b8" /><rect x="983.2" y="180.0" width="9.3" height="50.4" fill="#30d6d6"/><polygon points="992.5,180.4 1102.0,170.4 1102.0,220.4 992.5,230.4" fill="#36f2f2" /></g><polyline points="879.6,154.4 990.6,180.0 1102.0,170.2" fill="none" stroke="#1f9a9a" stroke-width="2.2" /><rect x="854.0" y="162.0" width="9.0" height="464.0" fill="#6e6e6e"/><rect x="863.0" y="160.0" width="19.4" height="466.0" fill="#8c8c8c"/><polygon points="854.0,163.8 863.0,162.0 882.4,159.2 882.4,162.5 863.0,165.5 854.0,166.5" fill="#5a4a3a" /><polygon points="713.8,404.9 771.7,398.5 871.5,425.0 811.9,430.7" fill="#8b4274" /><polygon points="713.8,404.9 811.9,430.7 811.9,437.3 713.8,411.5" fill="#5c5c5c" /><polygon points="811.9,430.7 871.5,425.0 871.5,431.6 811.9,437.3" fill="#5c5c5c" /><polyline points="713.8,404.9 811.9,430.7 871.5,425.0" fill="none" stroke="#d890c0" stroke-width="0.8" /><polyline points="713.8,404.9 771.7,398.5 871.5,425.0 811.9,430.7 713.8,404.9" fill="none" stroke="#f0f040" stroke-width="1.2" /><polyline points="713.8,404.9 713.8,411.5 811.9,437.3 871.5,431.6 871.5,425.0" fill="none" stroke="#f0f040" stroke-width="1.2" /><polyline points="811.9,430.7 811.9,437.3" fill="none" stroke="#f0f040" stroke-width="1.2" /><polyline points="771.7,398.5 771.7,405.1 871.5,431.6" fill="none" stroke="#f0f040" stroke-width="1" /><polyline points="771.7,405.1 713.8,411.5" fill="none" stroke="#f0f040" stroke-width="1" /><polyline points="438.0,482.0 505.2,498.8" fill="none" stroke="#f02020" stroke-width="1.3" /><polyline points="452.0,489.0 505.2,507.9" fill="none" stroke="#f02020" stroke-width="1.3" /><polyline points="466.0,497.0 505.2,492.0" fill="none" stroke="#f02020" stroke-width="1.2" /><polyline points="443.0,486.0 506.0,503.0" fill="none" stroke="#8a8a6a" stroke-width="0.8" /><polyline points="552.2,519.3 854.0,599.3" fill="none" stroke="#f02020" stroke-width="1.3" /><polyline points="417.0,536.0 600.0,526.0" fill="none" stroke="#1a7a1a" stroke-width="1.9" /><polyline points="417.0,554.0 640.0,534.2 700.0,529.0" fill="none" stroke="#1a7a1a" stroke-width="1.9" /><polyline points="417.0,572.4 676.0,546.3" fill="none" stroke="#1a7a1a" stroke-width="1.9" /><polyline points="600.0,561.0 686.4,553.4" fill="none" stroke="#1a7a1a" stroke-width="1.9" /><polyline points="438.7,593.5 640.0,574.4 730.7,568.5" fill="none" stroke="#1a7a1a" stroke-width="1.9" /><polyline points="506.0,613.4 797.0,585.0" fill="none" stroke="#1a7a1a" stroke-width="1.9" /><polyline points="640.0,623.6 859.5,602.7" fill="none" stroke="#1a7a1a" stroke-width="1.9" /><polyline points="455.0,532.0 640.0,580.5 760.0,611.0" fill="none" stroke="#1a7a1a" stroke-width="1.9" /><polyline points="430.0,558.0 640.0,612.7 690.0,626.0" fill="none" stroke="#1a7a1a" stroke-width="1.9" /><polyline points="420.0,521.0 470.0,535.0" fill="none" stroke="#1a7a1a" stroke-width="1.9" /><polyline points="417.0,585.0 470.0,566.0" fill="none" stroke="#1a7a1a" stroke-width="1.9" /><polyline points="869.6,603.4 941.5,617.8" fill="none" stroke="#1a7a1a" stroke-width="1.9" /><ellipse cx="432" cy="520" rx="16" ry="14" fill="none" stroke="#1a7a1a" stroke-width="1.2"/><ellipse cx="428" cy="546" rx="16" ry="14" fill="none" stroke="#1a7a1a" stroke-width="1.2"/><ellipse cx="431" cy="592" rx="14" ry="13" fill="none" stroke="#1a7a1a" stroke-width="1.2"/><ellipse cx="489" cy="614" rx="15" ry="12" fill="none" stroke="#1a7a1a" stroke-width="1.2"/><ellipse cx="438" cy="478" rx="14" ry="10" fill="none" stroke="#1a7a1a" stroke-width="1.2"/><ellipse cx="945" cy="622" rx="14" ry="10" fill="none" stroke="#1a7a1a" stroke-width="1.2"/><ellipse cx="660" cy="622" rx="13" ry="9" fill="none" stroke="#1a7a1a" stroke-width="1.2"/><ellipse cx="437" cy="476" rx="13" ry="11" fill="none" stroke="#1a7a1a" stroke-width="1.1"/><ellipse cx="435" cy="525" rx="14" ry="12" fill="none" stroke="#1a7a1a" stroke-width="1.1"/><ellipse cx="433" cy="546" rx="13" ry="11" fill="none" stroke="#1a7a1a" stroke-width="1.1"/><ellipse cx="441" cy="592" rx="13" ry="12" fill="none" stroke="#1a7a1a" stroke-width="1.1"/><ellipse cx="430" cy="505" rx="12" ry="10" fill="none" stroke="#1a7a1a" stroke-width="1.1"/><text x="0" y="0" font-family="Liberation Sans" font-size="16" fill="#ffffff" text-anchor="end" transform="translate(461 489) rotate(0) scale(0.95 1)">33</text><text x="0" y="0" font-family="Liberation Sans" font-size="16" fill="#ffffff" text-anchor="end" transform="translate(453 506) rotate(0) scale(0.95 1)">11-N</text><text x="0" y="0" font-family="Liberation Sans" font-size="16" fill="#ffffff" text-anchor="end" transform="translate(450 527.5) rotate(0) scale(0.95 1)">11-Y</text><text x="0" y="0" font-family="Liberation Sans" font-size="16" fill="#ffffff" text-anchor="end" transform="translate(451.5 535.5) rotate(0) scale(0.95 1)">11-R</text><text x="0" y="0" font-family="Liberation Sans" font-size="16" fill="#ffffff" text-anchor="end" transform="translate(450 548.7) rotate(0) scale(0.95 1)">11-S</text><text x="0" y="0" font-family="Liberation Sans" font-size="16" fill="#ffffff" text-anchor="end" transform="translate(448 560.7) rotate(0) scale(0.95 1)">11-T</text><text x="0" y="0" font-family="Liberation Sans" font-size="16" fill="#ffffff" text-anchor="end" transform="translate(442 573) rotate(0) scale(0.95 1)">11</text><text x="0" y="0" font-family="Liberation Sans" font-size="16" fill="#ffffff" text-anchor="end" transform="translate(456.7 582) rotate(0) scale(0.95 1)">11-W</text><text x="0" y="0" font-family="Liberation Sans" font-size="16" fill="#ffffff" text-anchor="end" transform="translate(452.8 604.4) rotate(0) scale(0.95 1)">11-X</text><text x="0" y="0" font-family="Liberation Sans" font-size="17" fill="#ffffff" text-anchor="start" transform="translate(473 622.5) rotate(0) scale(1 1)">11-Y</text><text x="0" y="0" font-family="Liberation Sans" font-size="17" fill="#ffffff" text-anchor="start" transform="translate(439 548) rotate(15) scale(1 1)">900</text><text x="0" y="0" font-family="Liberation Sans" font-size="18" fill="#ffffff" text-anchor="start" transform="translate(472 557) rotate(15) scale(1 1)">1200</text><text x="0" y="0" font-family="Liberation Sans" font-size="18" fill="#ffffff" text-anchor="start" transform="translate(503 569) rotate(15) scale(1 1)">0500</text><text x="0" y="0" font-family="Liberation Sans" font-size="18" fill="#ffffff" text-anchor="start" transform="translate(539 579) rotate(15) scale(1 1)">1300</text><text x="0" y="0" font-family="Liberation Sans" font-size="18" fill="#ffffff" text-anchor="start" transform="translate(597 597) rotate(15) scale(1 1)">1600</text><text x="0" y="0" font-family="Liberation Sans" font-size="18" fill="#ffffff" text-anchor="start" transform="translate(665 614) rotate(15) scale(1 1)">1700</text><text x="0" y="0" font-family="Liberation Sans" font-size="16" fill="#ffffff" text-anchor="start" transform="translate(643 630) rotate(10) scale(0.95 1)">14-Y1</text><text x="0" y="0" font-family="Liberation Sans" font-size="16" fill="#ffffff" text-anchor="start" transform="translate(919 630) rotate(8) scale(0.95 1)">11-350</text><polygon points="566.4,501.9 621.2,496.3 748.3,530.9 693.5,536.5" fill="#727272" /><polygon points="566.4,501.9 693.5,536.5 693.5,551.3 566.4,516.7" fill="#b2b2b2" /><polygon points="693.5,536.5 748.3,530.9 748.3,538.1 700.0,543.0 700.0,551.3 693.5,551.3" fill="#c8c8c8" /><clipPath id="colc"><rect x="417" y="104" width="437" height="522"/></clipPath><g clip-path="url(#colc)"><polygon points="713.0,542.0 767.8,536.4 866.7,563.3 811.9,568.9" fill="#727272" /><polygon points="713.0,542.0 811.9,568.9 811.9,583.4 713.0,556.5" fill="#b2b2b2" /><polygon points="811.9,568.9 866.7,563.3 866.7,570.3 818.4,575.2 818.4,583.4 811.9,583.4" fill="#c8c8c8" /></g><polygon points="608.3,334.5 629.4,323.4 631.2,326.2 640.2,314.2 625.4,316.9 627.1,319.7 607.7,333.7" fill="#ff2020" /><polygon points="720.4,367.1 731.9,348.5 734.3,349.7 736.1,336.0 725.8,345.3 728.3,346.6 719.6,366.7" fill="#ff2020" /><polygon points="552.5,587.3 621.1,541.7 623.2,544.7 634.2,529.0 615.7,534.1 617.9,537.1 551.9,586.5" fill="#ff2020" /><polygon points="715.0,574.9 710.4,550.1 713.4,549.3 704.2,536.2 702.7,552.1 705.7,551.3 714.0,575.1" fill="#ff2020" /><polyline points="466.9,568.0 466.9,584.0" fill="none" stroke="#1030e8" stroke-width="3" /><polygon points="461.9,569.0 471.9,569.0 466.9,556.0" fill="#1030e8" /><text x="0" y="0" font-family="Liberation Sans" font-size="12" fill="#1030e8" text-anchor="start" transform="translate(462.5 554.5) rotate(0) scale(0.95 1)">Z</text><polyline points="449.0,585.5 464.0,584.5" fill="none" stroke="#ff1010" stroke-width="3" /><polygon points="451.0,580.5 451.0,590.5 442.0,586.0" fill="#ff1010" /><text x="0" y="0" font-family="Liberation Sans" font-size="11" fill="#ff1010" text-anchor="start" transform="translate(435 593) rotate(0) scale(0.95 1)">X</text><polyline points="467.0,586.0 480.0,587.0" fill="none" stroke="#20f020" stroke-width="3.5" /><circle cx="473" cy="586.5" r="3.5" fill="#20f020"/><text x="0" y="0" font-family="Liberation Sans" font-size="11" fill="#20f020" text-anchor="start" transform="translate(481 594) rotate(0) scale(0.95 1)">Y</text></g></svg><div style="position:absolute;left:1069px;top:104px;width:33px;height:246px;background:#fff;border:1px solid #e2e2e2;border-top:none;border-radius:0 0 3px 3px"></div><svg style="left:0;top:0" width="1243" height="626"><circle cx="1085.2" cy="127" r="9" fill="none" stroke="#5b6478" stroke-width="1.2"/><ellipse cx="1084.7" cy="127.3" rx="11" ry="3.6" transform="rotate(-30 1084.7 127.8)" fill="none" stroke="#3a78d0" stroke-width="1.2"/><rect x="1075.8" y="147.8" width="18" height="17.5" rx="2" fill="none" stroke="#555" stroke-width="1.2"/><text x="1077.3" y="163.2" font-family="Liberation Sans" font-size="7.5" font-weight="bold" fill="#3a78d0">2D</text><path d="M1076 179.5 L1079.5 176 H1094 V190.5 L1090.5 194.4 H1076 Z M1076 179.5 H1090.5 V194.4 M1090.5 179.5 L1094 176" fill="none" stroke="#555" stroke-width="1.2"/><path d="M1076.5 179 L1079.5 176.5 H1093.5 L1090.5 179Z" fill="#d6e6fa"/><path d="M1082.7 203 h6 l-3 3.2z" fill="#444"/><path d="M1075.8 218 L1080 213.8 H1095 V229.5 L1091 233.5 H1075.8 Z" fill="#c9dcf5" stroke="#3a78d0" stroke-width="1.3"/><path d="M1075.8 218 H1091 V233.5 M1091 218 L1095 213.8" fill="none" stroke="#3a78d0" stroke-width="1.2"/><path d="M1082.7 242 h6 l-3 3.2z" fill="#444"/><path d="M1075.8 257.5 V253.3 H1080 M1090.5 253.3 H1094.8 V257.5 M1094.8 268 V272.3 H1090.5 M1080 272.3 H1075.8 V268" fill="none" stroke="#555" stroke-width="1.3"/><rect x="1075.8" y="281.8" width="19" height="19.5" rx="2.5" fill="none" stroke="#555" stroke-width="1.1" stroke-dasharray="2.2 1.6"/><path d="M1085.3 285.5 L1090.3 288.3 V294.3 L1085.3 297.3 L1080.3 294.3 V288.3 Z M1080.3 288.3 L1085.3 291.2 L1090.3 288.3 M1085.3 291.2 V297.3" fill="none" stroke="#3a78d0" stroke-width="1.2"/><rect x="1073" y="308.3" width="24" height="1" fill="#888"/><path d="M1093.8 324 V316.5 H1075.8 V335.5 H1084.5" fill="none" stroke="#555" stroke-width="1.2"/><path d="M1079 321.3 h1.8 M1082 321.3 h8 M1079 325.3 h1.8 M1082 325.3 h5 M1079 329.3 h1.8" stroke="#555" stroke-width="1.2"/><ellipse cx="1090.5" cy="332.3" rx="4.3" ry="2.8" fill="#fff" stroke="#3a78d0" stroke-width="1.2"/><circle cx="1090.7" cy="332.3" r="1.4" fill="#3a78d0"/></svg></body></html>
